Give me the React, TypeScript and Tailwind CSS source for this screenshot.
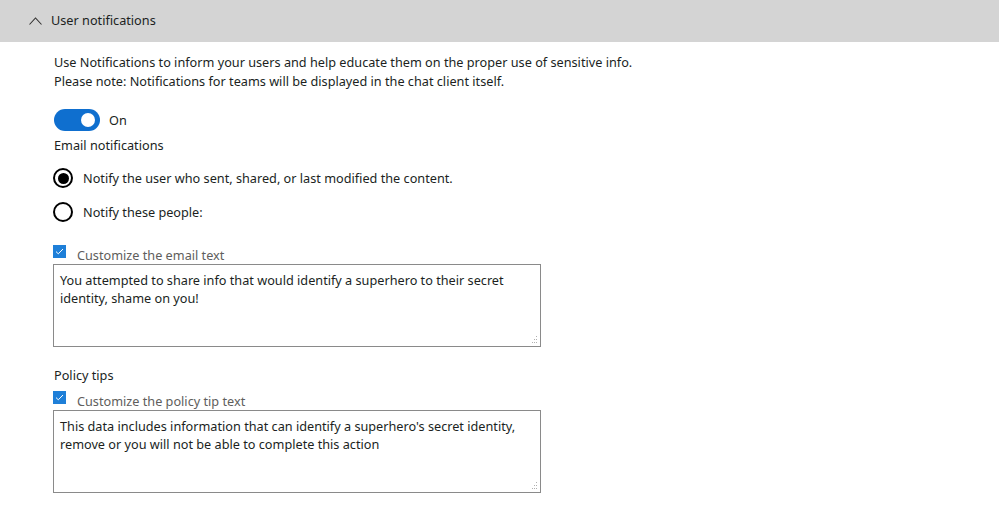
import React from 'react';

const Radio: React.FC<{ checked?: boolean; label: string }> = ({ checked, label }) => (
    <div className="flex items-center gap-[10px] h-[20px]">
        <span className="w-[20px] h-[20px] rounded-full border-2 border-black flex items-center justify-center">
            {checked && <span className="w-[11px] h-[11px] rounded-full bg-black" />}
        </span>
        <span className="leading-[19px] text-[#201f1e]">{label}</span>
    </div>
);

const Check: React.FC<{ label: string }> = ({ label }) => (
    <div className="flex items-start gap-[11px]">
        <span className="w-[13px] h-[13px] bg-[#1e7fd8] flex items-center justify-center">
            <svg width="9" height="7" viewBox="0 0 9 7" fill="none">
                <path d="M1 3.6 L3.3 5.8 L8 1" stroke="white" strokeWidth="1" />
            </svg>
        </span>
        <span className="leading-[17px] pt-[2px] text-[#605e5c]">{label}</span>
    </div>
);

const TextBox: React.FC<{ text: string }> = ({ text }) => (
    <div className="relative w-[488px] h-[83px] border border-[#8a8a8a] px-[6px] pt-[6px] leading-[18px] text-[#201f1e]">
        {text}
        {/* resize grip */}
        <svg className="absolute right-[2px] bottom-[2px]" width="8" height="8" viewBox="0 0 8 8">
            <rect x="6" y="0" width="1" height="1" fill="#b0b0b0" />
            <rect x="4" y="3" width="1" height="1" fill="#b0b0b0" />
            <rect x="6" y="3" width="1" height="1" fill="#b0b0b0" />
            <rect x="2" y="6" width="1" height="1" fill="#b0b0b0" />
            <rect x="4" y="6" width="1" height="1" fill="#b0b0b0" />
            <rect x="6" y="6" width="1" height="1" fill="#b0b0b0" />
        </svg>
    </div>
);

export default function App() {
    return (
        <div
            className="w-[999px] h-[510px] bg-white text-[12.7px] overflow-hidden"
            style={{ fontFamily: '"Noto Sans", "Open Sans", sans-serif' }}
        >
            {/* Header */}
            <div className="h-[42px] bg-[#d4d4d4] flex items-center pl-[29px] pb-[1px] gap-[9px] text-[#201f1e]">
                <svg width="13" height="8" viewBox="0 0 13 8" fill="none">
                    <path d="M0.5 7.5 L6.5 1 L12.5 7.5" stroke="#323130" strokeWidth="1.1" />
                </svg>
                <span className="leading-[19px]">User notifications</span>
            </div>

            <div className="pl-[53px] pt-[11px] text-[#201f1e]">
                <p className="leading-[19px] pl-[1px]">
                    Use Notifications to inform your users and help educate them on the proper use of sensitive info.
                    <br />
                    Please note: Notifications for teams will be displayed in the chat client itself.
                </p>

                {/* Toggle */}
                <div className="flex items-center gap-[9px] mt-[18px] pl-[1px]">
                    <span className="w-[46px] h-[22px] rounded-full bg-[#0f6fcf] flex items-center justify-end pr-[5px]">
                        <span className="w-[14px] h-[14px] rounded-full bg-white" />
                    </span>
                    <span className="leading-[19px]">On</span>
                </div>

                <p className="mt-[5px] leading-[19px] pl-[1px]">Email notifications</p>

                <div className="mt-[13px]">
                    <Radio checked label="Notify the user who sent, shared, or last modified the content." />
                </div>
                <div className="mt-[14px]">
                    <Radio label="Notify these people:" />
                </div>

                <div className="mt-[23px]">
                    <Check label="Customize the email text" />
                </div>
                <TextBox text="You attempted to share info that would identify a superhero to their secret identity, shame on you!" />

                <p className="mt-[19px] leading-[19px] pl-[1px]">Policy tips</p>
                <div className="mt-[6px]">
                    <Check label="Customize the policy tip text" />
                </div>
                <TextBox text="This data includes information that can identify a superhero's secret identity, remove or you will not be able to complete this action" />
            </div>
        </div>
    );
}
